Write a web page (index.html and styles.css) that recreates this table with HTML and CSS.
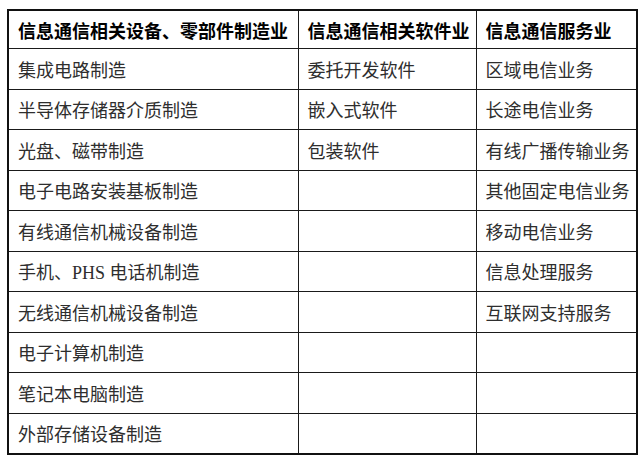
FILE: index.html
```html
<!DOCTYPE html>
<html lang="zh-CN">
<head>
<meta charset="utf-8">
<title>信息通信产业分类</title>
<link rel="stylesheet" href="styles.css">
</head>
<body>
<div class="page">
<table class="grid">
<colgroup>
<col class="c1"><col class="c2"><col class="c3">
</colgroup>
<thead>
<tr><th>信息通信相关设备、零部件制造业</th><th>信息通信相关软件业</th><th>信息通信服务业</th></tr>
</thead>
<tbody>
<tr><td>集成电路制造</td><td>委托开发软件</td><td>区域电信业务</td></tr>
<tr><td>半导体存储器介质制造</td><td>嵌入式软件</td><td>长途电信业务</td></tr>
<tr><td>光盘、磁带制造</td><td>包装软件</td><td>有线广播传输业务</td></tr>
<tr><td>电子电路安装基板制造</td><td></td><td>其他固定电信业务</td></tr>
<tr><td>有线通信机械设备制造</td><td></td><td>移动电信业务</td></tr>
<tr><td>手机、PHS 电话机制造</td><td></td><td>信息处理服务</td></tr>
<tr><td>无线通信机械设备制造</td><td></td><td>互联网支持服务</td></tr>
<tr><td>电子计算机制造</td><td></td><td></td></tr>
<tr><td>笔记本电脑制造</td><td></td><td></td></tr>
<tr><td>外部存储设备制造</td><td></td><td></td></tr>
</tbody>
</table>
</div>
</body>
</html>
```
FILE: styles.css
```css
html, body {
  margin: 0;
  padding: 0;
  background: #ffffff;
}
.page {
  padding: 9px 0 0 7px;
}
.grid {
  border-collapse: collapse;
  width: 629px;
  table-layout: fixed;
  border: 2px solid #111;
  font-family: "Liberation Serif", "Noto Sans CJK SC", serif;
  font-size: 18px;
  color: #2e2e2e;
}
.c1 { width: 290px; }
.c2 { width: 178px; }
.c3 { width: 161px; }
.grid th,
.grid td {
  border: 1px solid #1a1a1a;
  padding: 0 0 0 9px;
  text-align: left;
  vertical-align: middle;
  white-space: nowrap;
  overflow: hidden;
}
.grid th {
  height: 37px;
  font-weight: bold;
  color: #000;
  font-family: "Noto Sans CJK SC", sans-serif;
}
.grid td {
  height: 39.5px;
  font-weight: normal;
}
```
